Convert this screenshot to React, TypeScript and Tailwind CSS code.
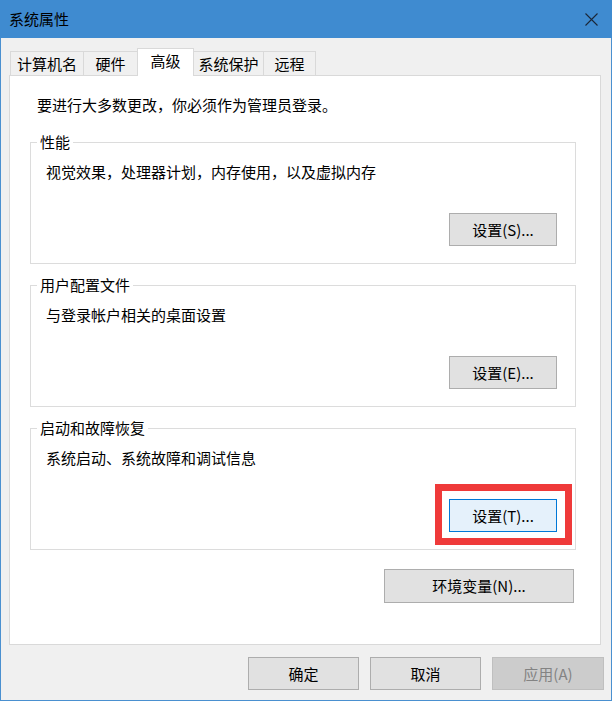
import React from "react";

const font = "font-['Noto_Sans_CJK_SC','Microsoft_YaHei',sans-serif]";

function Btn({
  label,
  w = "w-[108px]",
  h = "h-[33px]",
  variant = "normal",
}: {
  label: string;
  w?: string;
  h?: string;
  variant?: "normal" | "focus" | "disabled";
}) {
  const cls =
    variant === "focus"
      ? "bg-[#e5f1fb] border-[#0078d7] text-black"
      : variant === "disabled"
      ? "bg-[#cccccc] border-[#bfbfbf] text-[#838383]"
      : "bg-[#e1e1e1] border-[#adadad] text-black";
  return (
    <div
      className={`${w} ${h} ${cls} border flex items-center justify-center text-[15px] leading-[20px]`}
    >
      {label}
    </div>
  );
}

function Group({
  title,
  desc,
  children,
}: {
  title: string;
  desc: string;
  children: React.ReactNode;
}) {
  return (
    <fieldset className="w-[546px] ml-[20px] border border-[#dcdcdc] pl-[15px] pr-[18px] pt-[10px] pb-[17px] flex flex-col">
      <legend className="-ml-[9px] px-[3px] text-[15px] leading-[20px] text-black">
        {title}
      </legend>
      <div className="text-[15px] leading-[20px] text-black">{desc}</div>
      <div className="mt-[31px] flex justify-end">{children}</div>
    </fieldset>
  );
}

export default function App() {
  const tabs = [
    { label: "计算机名", w: "w-[74px]" },
    { label: "硬件", w: "w-[55px]" },
    { label: "高级", w: "w-[57px]", active: true },
    { label: "系统保护", w: "w-[71px]" },
    { label: "远程", w: "w-[53px]" },
  ];
  return (
    <div className={`${font} w-[612px] h-[701px] bg-[#f0f0f0] border-l border-r border-b border-[#4a90d0] flex flex-col`}>
      {/* title bar */}
      <div className="h-[38px] bg-[#3f8bd0] flex items-center justify-between pl-[9px] pr-[13px] -mx-px">
        <span className="text-[15px] leading-[20px] text-black">系统属性</span>
        <svg width="13" height="13" viewBox="0 0 13 13" className="mr-[1px]">
          <path d="M0.5 0.5 L12.5 12.5 M12.5 0.5 L0.5 12.5" stroke="#1b2738" strokeWidth="1.1" fill="none" />
        </svg>
      </div>

      <div className="ml-[8px] w-[592px] flex flex-col">
        {/* tabs */}
        <div className="mt-[10px] h-[28px] flex items-end relative z-10 pl-[1px]">
          {tabs.map((t, i) => (
            <div
              key={t.label}
              className={`${t.w} ${i > 0 ? "-ml-px" : ""} ${
                t.active
                  ? "h-[28px] bg-white border-t border-l border-r border-[#d9d9d9] relative z-10 pb-[3px]"
                  : "h-[25px] bg-[#f0f0f0] border border-[#d9d9d9]"
              } flex items-center justify-center text-[15px] leading-[20px] text-black`}
            >
              {t.label}
            </div>
          ))}
        </div>

        {/* panel */}
        <div className="-mt-px h-[570px] bg-white border border-[#d9d9d9] flex flex-col">
          <div className="mt-[19px] pl-[27px] text-[15px] leading-[20px] text-black">
            要进行大多数更改，你必须作为管理员登录。
          </div>
          <div className="mt-[17px]">
            <Group title="性能" desc="视觉效果，处理器计划，内存使用，以及虚拟内存">
              <Btn label="设置(S)..." />
            </Group>
          </div>
          <div className="mt-[11px]">
            <Group title="用户配置文件" desc="与登录帐户相关的桌面设置">
              <Btn label="设置(E)..." />
            </Group>
          </div>
          <div className="mt-[11px]">
            <Group title="启动和故障恢复" desc="系统启动、系统故障和调试信息">
              <div className="relative">
                <Btn label="设置(T)..." variant="focus" />
                <div className="absolute -left-[14px] -top-[15px] w-[137px] h-[61px] border-[7px] border-[#ef3a3a] pointer-events-none" />
              </div>
            </Group>
          </div>
          <div className="mt-[19px] flex justify-end mr-[26px]">
            <Btn label="环境变量(N)..." w="w-[190px]" h="h-[34px]" />
          </div>
        </div>
      </div>

      {/* bottom buttons */}
      <div className="mt-[12px] flex justify-end gap-[11px] pr-[7px]">
        <Btn label="确定" w="w-[111px]" />
        <Btn label="取消" w="w-[111px]" />
        <Btn label="应用(A)" w="w-[112px]" variant="disabled" />
      </div>
    </div>
  );
}
